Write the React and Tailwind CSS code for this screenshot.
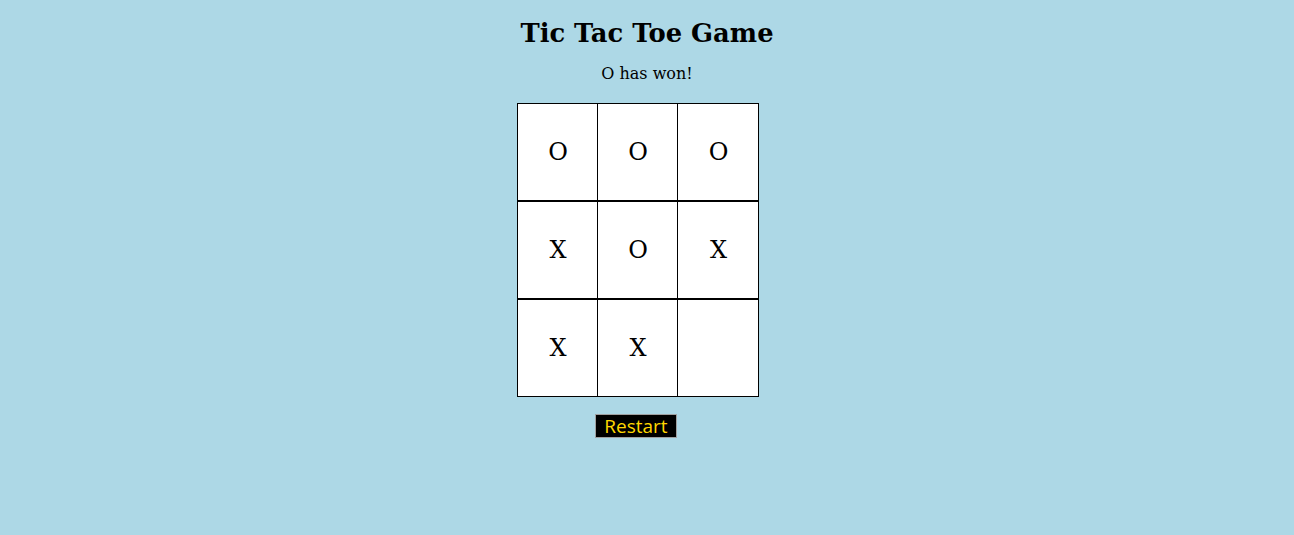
export default function App() {
  const board = [
    ["O", "O", "O"],
    ["X", "O", "X"],
    ["X", "X", ""],
  ];
  return (
    <div className="min-h-[535px] w-full bg-[#add8e6] flex flex-col items-center text-black" style={{ fontFamily: '"DejaVu Serif", serif' }}>
      <h1 className="mt-[18px] text-[25.8px] font-bold leading-[30px]">Tic Tac Toe Game</h1>
      <p className="mt-[16px] text-[16px] leading-[19px]">O has won!</p>
      <div className="mt-[20px] mr-[18px] flex flex-col items-center">
        <div className="flex flex-col bg-white">
          {board.map((row, r) => (
            <div key={r} className="flex border-y border-black">
              {row.map((c, i) => (
                <div
                  key={i}
                  className={`h-[96px] flex items-center justify-center text-[24px] border-l border-black ${i === 2 ? "w-[82px] border-r" : "w-[80px]"}`}
                >
                  <span className="pl-[1px]">{c}</span>
                </div>
              ))}
            </div>
          ))}
        </div>
        <button
          className="mt-[17px] -ml-[4px] h-[24px] w-[82px] bg-black border border-[#a0a0a0] text-[#ffd700] text-[19px] font-medium leading-none flex items-center justify-center"
          style={{ fontFamily: '"Open Sans", sans-serif' }}
        >
          Restart
        </button>
      </div>
    </div>
  );
}
